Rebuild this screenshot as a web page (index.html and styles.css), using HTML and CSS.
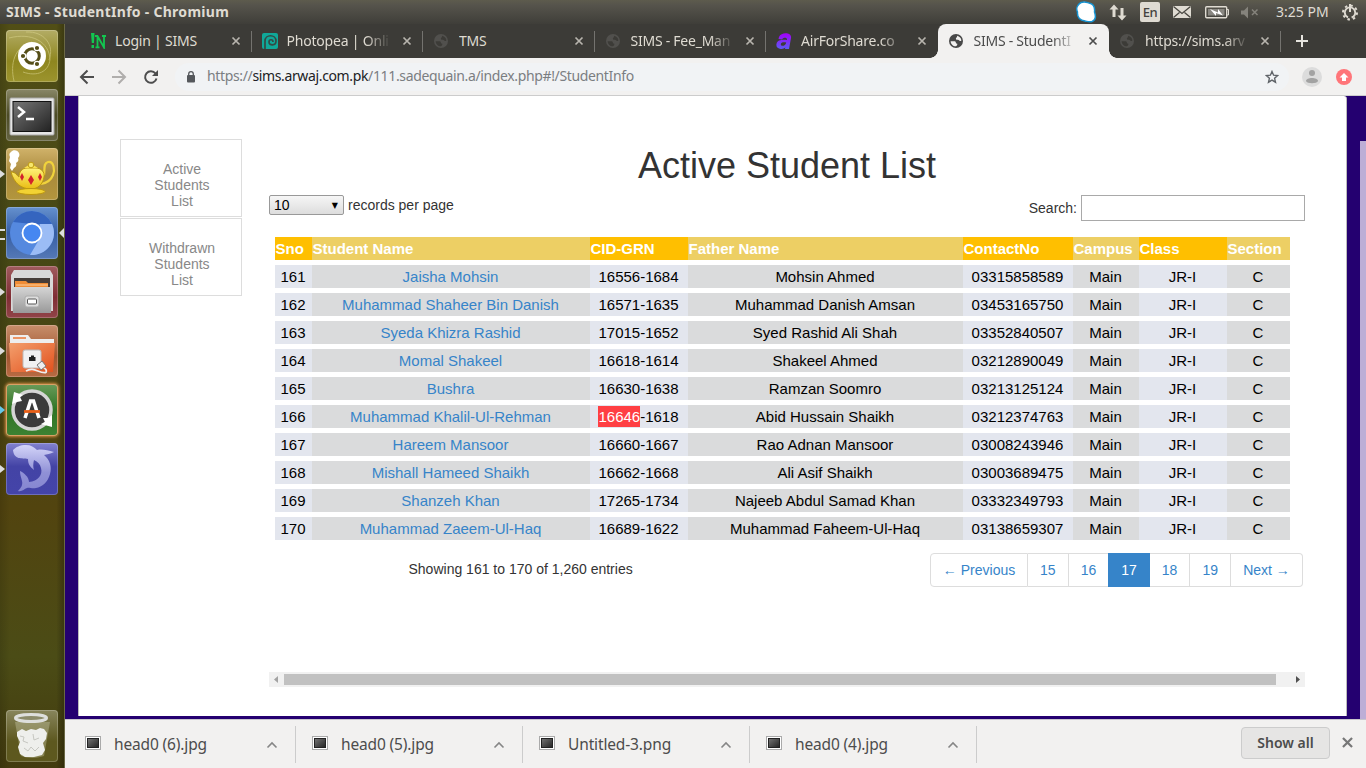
FILE: index.html
```html
<!DOCTYPE html>
<html lang="en">
<head>
<meta charset="utf-8">
<title>SIMS - StudentInfo</title>
<link rel="stylesheet" href="styles.css">
</head>
<body>
<svg class="defs" width="0" height="0">
  <defs>
    <symbol id="globe" viewBox="0 0 14 14"><circle cx="7" cy="7" r="7" fill="currentColor"/><path class="land" d="M1.6 7.2h3.6c1.3 0 1.7.7 1.7 1.6 0 .8.7.9 1.4.9.2 1.300-.4 2-1.300 2.500-3 .1-5.200-2-5.400-5zM8.200 1.700c2.300.5 4 2.500 4.200 4.700-.6.700-1.200.7-1.900.4-.5-.8-1.200-1-2.300-1-1 0-1.300-.6-1.300-1.300 0-.8 1.400-1.200 1.300-2.800z"/></symbol>
    <symbol id="close" viewBox="0 0 10 10"><path d="M1.500 1.500l7 7M8.500 1.500l-7 7" fill="none" stroke="currentColor" stroke-width="1.700"/></symbol>
    <symbol id="chev" viewBox="0 0 12 8"><path d="M1.500 6.500L6 2l4.500 4.500" fill="none" stroke="#868686" stroke-width="1.600"/></symbol>
    <symbol id="pic" viewBox="0 0 16 14"><rect x=".5" y=".5" width="15" height="13" fill="#fff" stroke="#aaa"/><rect x="2.500" y="2.500" width="11" height="9" fill="url(#dark)" stroke="#222"/></symbol>
    <linearGradient id="dark" x1="0" y1="0" x2="1" y2="1"><stop offset="0" stop-color="#777"/><stop offset="1" stop-color="#222"/></linearGradient>
    <linearGradient id="silver" x1="0" y1="0" x2="0" y2="1"><stop offset="0" stop-color="#d5d5d5"/><stop offset="1" stop-color="#999"/></linearGradient>
    <linearGradient id="orange" x1="0" y1="0" x2="1" y2="1"><stop offset="0" stop-color="#f3a06e"/><stop offset="1" stop-color="#e2501c"/></linearGradient>
    <linearGradient id="gold" x1="0" y1="0" x2="0" y2="1"><stop offset="0" stop-color="#fff27a"/><stop offset="1" stop-color="#e9bc12"/></linearGradient>
    <linearGradient id="fin" x1="0" y1="0" x2="0" y2="1"><stop offset="0" stop-color="#d3d4f8"/><stop offset=".6" stop-color="#8f90d6"/><stop offset="1" stop-color="#8586d0"/></linearGradient>
    <linearGradient id="purple" x1="0" y1="0" x2="0" y2="1"><stop offset="0" stop-color="#a400f8"/><stop offset="1" stop-color="#5b5bf6"/></linearGradient>
  </defs>
</svg>

<header class="titlebar">
  <span class="wm-title">SIMS - StudentInfo - Chromium</span>
  <svg class="tray" width="290" height="24" viewBox="1076 0 290 24">
    <path d="M1082 2.500c4-1.500 6 0 8 .5 5 1 6 5 5.500 9 1.500 4 1 8-2.500 9.500-3 1-5-.2-7-.500-5-.7-8-4-7.500-9-1.500-3-.5-7 3.500-9.500z" transform="translate(-1)" fill="#fff" stroke="#1793d1" stroke-width="1.500"/>
    <g fill="#dfdbd2"><path d="M1114 4.500l4.500 5h-3v7.500h-3V9.500h-3zM1122 20.500l-4.500-5h3V8h3v7.500h3z"/>
    <rect x="1140" y="2" width="20" height="20" rx="2"/><rect x="1173" y="6" width="18" height="12"/></g>
    <path d="M1173.500 6.500l8.500 7 8.500-7M1173.500 17.500l6-5M1190.500 17.500l-6-5" fill="none" stroke="#47453f" stroke-width="1.300"/>
    <rect x="1205.700" y="6.700" width="21" height="11" rx="1" fill="none" stroke="#dfdbd2" stroke-width="1.400"/><rect x="1208" y="9" width="16.500" height="6.500" fill="#898781"/><path d="M1227 9.500h1.500v5.500h-1.500" fill="none" stroke="#dfdbd2"/><path d="M1210 9l8 3.500V9l5 6.500-7-2.500v3z" fill="#fff"/>
    <path d="M1241 10.500h3l4-4v12l-4-4h-3z" fill="#85837c"/><path d="M1252 9.500l5.500 5.500m0-5.500l-5.500 5.500" stroke="#85837c" stroke-width="1.500"/>
    <g fill="none" stroke="#dfdbd2"><circle cx="1350" cy="12.500" r="5.200" stroke-width="1.800" stroke-dasharray="29 3.670" stroke-dashoffset="-10" transform="rotate(0 1350 12.500)"/><circle cx="1350" cy="12.500" r="7" stroke-width="2" stroke-dasharray="2.500 2.998"/><path d="M1350 4v8" stroke-width="2"/></g>
  </svg>
  <span class="lang">En</span><span class="clock">3:25 PM</span>
</header>

<div class="desktop">
<nav class="launcher">
  <div class="tile dash"><svg viewBox="0 0 52 52"><g fill="none" stroke="#d6d089" opacity=".6"><path d="M3 8C26 2 43 12 44 29 43 42 31 47 17 42" /><path d="M8 51C4 34 8 17 26 12M20 2c18-1 29 13 23 28"/></g><circle cx="26" cy="26" r="14" fill="#fff"/><circle cx="26" cy="26" r="7.300" fill="none" stroke="#554e18" stroke-width="3"/><g fill="#554e18" stroke="#fff" stroke-width="1.200"><circle cx="17" cy="26" r="2.700"/><circle cx="31" cy="18" r="2.700"/><circle cx="31" cy="34" r="2.700"/></g></svg></div>
  <div class="tile term"><svg viewBox="0 0 52 52"><rect x="4" y="9" width="44" height="37" rx="1" fill="#e5e5e5" stroke="#aaa"/><rect x="7" y="12.500" width="38" height="30" fill="url(#dark)" stroke="#111"/><path d="M12 18l6 5-6 5M20 30h8" stroke="#fff" stroke-width="2.500" fill="none"/></svg></div>
  <div class="tile lamp run"><svg viewBox="0 0 52 52"><path d="M5 4c2-3 7-2 8 1 1 2 0 4-1 5 1 2 0 4-2 5 1 2 0 4-2 5l-2 3-2-3 1-4-2-3 1-4c-1-2-1-4 1-5z" fill="#fff"/><path d="M38 27c1-5-1-12 4-13 6-1 7 8 5 13-2 5-6 8-12 9" fill="none" stroke="#f0d23c" stroke-width="2.200"/><path d="M5 24c5 0 6 4 8 5 0-5 3-9 8-9h9c5 0 9 4 8 9-1 7-6 12-13 12-10 0-17-6-20-17z" fill="url(#gold)" stroke="#bd970e"/><path d="M18 20q7-6 14 0z" fill="#f8df4d"/><circle cx="25" cy="17" r="2.800" fill="#f6e66c" stroke="#c29d12"/><ellipse cx="25" cy="43.500" rx="14" ry="3" fill="#f2d233" stroke="#bd970e"/><path d="M25 27l3 5-3 5-3-5zM16 25l2 4-2 4-2-4zM34 25l2 4-2 4-2-4z" fill="#d3222b"/></svg></div>
  <div class="tile chrom run two"><svg viewBox="0 0 52 52"><circle cx="26" cy="26" r="22" fill="#5589df"/><path d="M7 15a22 22 0 0 1 39 2H26z" fill="#3565bf"/><path d="M46 17a22 22 0 0 1-22 31l10-17V17z" fill="#9bbcf5"/><circle cx="26" cy="26" r="9.500" fill="#4687f1" stroke="#fff" stroke-width="1.800"/></svg></div>
  <div class="tile cab run"><svg viewBox="0 0 52 52"><path d="M8 4h36l3 5v36H5V9z" fill="#d9d9d9"/><rect x="8" y="12" width="36" height="11" fill="#463d39"/><path d="M9 15h11l2 2h20v6H9z" fill="#ef8c36"/><path d="M10 19h32" stroke="#ffd09d"/><path d="M6 21h40l-1 26H7z" fill="url(#silver)"/><rect x="19" y="30" width="14" height="11" rx="2" fill="#ddd" stroke="#aaa"/><rect x="21.500" y="33" width="9" height="5" rx="1" fill="#fff" stroke="#555"/></svg></div>
  <div class="tile folder run"><svg viewBox="0 0 52 52"><path d="M4 10h18l3 4h23v8H4z" fill="#eee"/><path d="M7 13h13" stroke="#eb9464" stroke-width="2"/><path d="M3 18h46l-2 29H5z" fill="url(#orange)"/><rect x="17" y="25" width="18" height="18" rx="2" fill="#f1f1f1" stroke="#bbb"/><path d="M23 36v-4h2v-1.500h3V32h1.500v4z" fill="#222"/><path d="M20 46c8-5 13 3 20 1.500M36 42c4 1 5 4 4 5.500" fill="none" stroke="#eee" stroke-width="1.800"/><path d="M31 40l5-4 4 5-5 4z" fill="#eee" stroke="#777"/></svg></div>
  <div class="tile update run focus"><svg viewBox="0 0 52 52"><circle cx="26" cy="26" r="19" fill="#3b3b3b" stroke="#d5d5d5" stroke-width="3.500"/><path d="M8 8l9 3-3 2 2 4-5 1-5 2zM46 43l-11-3 4-2-2-4 5 0 4-3z" fill="#fff"/><path d="M19 34l5.500-17h3L33 34" fill="none" stroke="#fff" stroke-width="3.500"/><path d="M18 27.500h16" stroke="#e96019" stroke-width="2.800"/></svg></div>
  <div class="tile dolphin run"><svg viewBox="0 0 52 52"><path d="M7 7c3-3 7-5 13-5 5 0 8 2 11 5 5-1 10 0 17 2-4 2-7 2-10 3 6 5 8 12 6 19-2 8-8 13-14 14-4 1-7-1-9 0-3 1-5 4-9 3 3-3 5-6 4-10-1-4-2-6-2-10 4 2 9 6 9 11 9-1 14-7 12-14-1-4-3-6-7-8-1 4-1 7 0 10-4-3-6-6-6-11-6-1-14 1-15-9z" fill="url(#fin)"/></svg></div>
  <div class="tile trash"><svg viewBox="0 0 52 52"><path d="M9 12l6 34q11 4 23 0l6-34z" fill="#d8d8b8" opacity=".35"/><path d="M11 22l5-3 4 2 5-2 5 1 4-2 4 1 3 4-1 6-3 4 2 7-3 5-8 2-9 0-5-3-2-7 2-5-3-6z" fill="#eeefec"/><path d="M14 26l4 1-1 4 5 2M27 24l1 6 5-2M18 38l4 3 3-4 4 4 4-4" fill="none" stroke="#c6c7c1"/><ellipse cx="25" cy="8" rx="15.500" ry="3.500" fill="#8c8b6a" stroke="#dedfdc" stroke-width="3"/></svg></div>
</nav>

<div class="browser">
  <div class="tabs">
    <div class="tab"><svg class="fav" viewBox="0 0 16 16"><path d="M1 0h3.500L4 10H1.800zM1.500 12h2.500v3H1.500z" fill="#12c750"/><path d="M7.500 3v11M14 3v11.500L7.500 3M5 3h3M12 3h4M5.500 14.300h4" fill="none" stroke="#12c750" stroke-width="1.800"/></svg><span class="tt">Login | SIMS</span><svg class="x"><use href="#close"/></svg></div>
    <div class="tab"><svg class="fav" viewBox="0 0 16 16"><rect width="16" height="16" rx="2" fill="#10a899"/><path d="M3 16V8c0-7 11-7 11 0 0 5-7 5-7 1 0-3 4-3 4 0" fill="none" stroke="#344a46" stroke-width="1.700"/></svg><span class="tt fade">Photopea | Onli</span><svg class="x"><use href="#close"/></svg></div>
    <div class="tab"><svg class="fav globe"><use href="#globe" width="14" height="14" x="1" y="1"/></svg><span class="tt">TMS</span><svg class="x"><use href="#close"/></svg></div>
    <div class="tab"><svg class="fav globe"><use href="#globe" width="14" height="14" x="1" y="1"/></svg><span class="tt fade tight">SIMS - Fee_Man</span><svg class="x"><use href="#close"/></svg></div>
    <div class="tab nosep"><svg class="fav" viewBox="0 0 16 16"><path d="M3 4c2-5 13-5 12 1l-2 11H9l.4-1.500C6 17.500-1 16 .6 10.500 1.500 7 6 6.500 11 7c.6-3-4-3-5-.5L2.500 6zM10.200 9.500C7 9 5 9.500 4.800 11.300c0 2.500 4.900 2 5.400-1.800z" fill="url(#purple)"/></svg><span class="tt fade">AirForShare.co</span><svg class="x"><use href="#close"/></svg></div>
    <div class="tab active"><svg class="fav globe"><use href="#globe" width="14" height="14" x="1" y="1"/></svg><span class="tt fade tight">SIMS - StudentI</span><svg class="x"><use href="#close"/></svg></div>
    <div class="tab"><svg class="fav globe"><use href="#globe" width="14" height="14" x="1" y="1"/></svg><span class="tt fade">https://sims.arv</span><svg class="x"><use href="#close"/></svg></div>
    <svg class="plus" viewBox="0 0 12 12"><path d="M6 0v12M0 6h12" stroke="#e6e4de" stroke-width="2"/></svg>
  </div>
  <div class="toolbar">
    <svg class="navs" width="110" height="36" viewBox="65 58 110 36" fill="none" stroke-width="2"><path d="M94 76H81M87.500 69.500L81 76l6.500 6.500" stroke="#4d4d4d"/><path d="M112 76h13M118.500 69.500L125 76l-6.500 6.500" stroke="#b0aeac"/><path d="M155.500 72.500a5.800 5.800 0 1 0 1 5" stroke="#4d4d4d"/><path d="M158 69v6h-6z" fill="#4d4d4d"/></svg>
    <div class="omni">
      <svg width="10" height="12" viewBox="0 0 10 12"><rect x="1" y="4" width="8" height="7.500" rx="1" fill="#55585c"/><path d="M2.700 5V3a2.300 2.300 0 0 1 4.600 0v2" fill="none" stroke="#55585c" stroke-width="1.300"/></svg>
      <span class="url">https://<b>sims.arwaj.com.pk</b>/111.sadequain.a/index.php#!/StudentInfo</span>
      <svg class="star" width="14" height="14" viewBox="0 0 14 14"><path d="M7 1.500l1.600 3.700 4 .4-3 2.700.9 3.900L7 10.100l-3.500 2.100.9-3.900-3-2.700 4-.4z" fill="none" stroke="#5f6368" stroke-width="1.400"/></svg>
    </div>
    <svg class="user" width="20" height="20" viewBox="0 0 20 20"><circle cx="10" cy="10" r="10" fill="#dcdcdc"/><circle cx="10" cy="6" r="3" fill="#a2a2a2"/><path d="M4 14c0-4 12-4 12 0-1 3-11 3-12 0z" fill="#a2a2a2"/></svg>
    <svg class="up" width="16" height="16" viewBox="0 0 16 16"><circle cx="8" cy="8" r="8" fill="#ff7579"/><path d="M8 4l4.500 4.500H10V12H6V8.500H3.500z" fill="#fff"/></svg>
  </div>

  <div class="viewport">
    <main class="panel">
      <aside class="side"><a>Active<br>Students<br>List</a><a>Withdrawn<br>Students<br>List</a></aside>
      <section class="content">
        <h1>Active Student List</h1>
        <div class="filters">
          <div class="length"><span class="select">10<i>▼</i></span>records per page</div>
          <label class="search">Search: <span class="field"></span></label>
        </div>
        <table>
          <colgroup><col class="c1"><col class="c2"><col class="c3"><col class="c4"><col class="c5"><col class="c6"><col class="c7"><col class="c8"></colgroup>
          <thead><tr><th>Sno</th><th>Student Name</th><th>CID-GRN</th><th>Father Name</th><th>ContactNo</th><th>Campus</th><th>Class</th><th>Section</th></tr></thead>
          <tbody>
            <tr><td>161</td><td>Jaisha Mohsin</td><td>16556-1684</td><td>Mohsin Ahmed</td><td>03315858589</td><td>Main</td><td>JR-I</td><td>C</td></tr>
            <tr><td>162</td><td>Muhammad Shaheer Bin Danish</td><td>16571-1635</td><td>Muhammad Danish Amsan</td><td>03453165750</td><td>Main</td><td>JR-I</td><td>C</td></tr>
            <tr><td>163</td><td>Syeda Khizra Rashid</td><td>17015-1652</td><td>Syed Rashid Ali Shah</td><td>03352840507</td><td>Main</td><td>JR-I</td><td>C</td></tr>
            <tr><td>164</td><td>Momal Shakeel</td><td>16618-1614</td><td>Shakeel Ahmed</td><td>03212890049</td><td>Main</td><td>JR-I</td><td>C</td></tr>
            <tr><td>165</td><td>Bushra</td><td>16630-1638</td><td>Ramzan Soomro</td><td>03213125124</td><td>Main</td><td>JR-I</td><td>C</td></tr>
            <tr><td>166</td><td>Muhammad Khalil-Ul-Rehman</td><td><mark>16646</mark>-1618</td><td>Abid Hussain Shaikh</td><td>03212374763</td><td>Main</td><td>JR-I</td><td>C</td></tr>
            <tr><td>167</td><td>Hareem Mansoor</td><td>16660-1667</td><td>Rao Adnan Mansoor</td><td>03008243946</td><td>Main</td><td>JR-I</td><td>C</td></tr>
            <tr><td>168</td><td>Mishall Hameed Shaikh</td><td>16662-1668</td><td>Ali Asif Shaikh</td><td>03003689475</td><td>Main</td><td>JR-I</td><td>C</td></tr>
            <tr><td>169</td><td>Shanzeh Khan</td><td>17265-1734</td><td>Najeeb Abdul Samad Khan</td><td>03332349793</td><td>Main</td><td>JR-I</td><td>C</td></tr>
            <tr><td>170</td><td>Muhammad Zaeem-Ul-Haq</td><td>16689-1622</td><td>Muhammad Faheem-Ul-Haq</td><td>03138659307</td><td>Main</td><td>JR-I</td><td>C</td></tr>
          </tbody>
        </table>
        <div class="foot">
          <span class="info">Showing 161 to 170 of 1,260 entries</span>
          <div class="pages"><a class="prev">← Previous</a><a>15</a><a>16</a><a class="on">17</a><a>18</a><a>19</a><a class="next">Next →</a></div>
        </div>
        <div class="hscroll"><svg width="15" height="15"><path d="M9 4v7L5 7.500z" fill="#a3a3a3"/></svg><div class="thumb"></div><svg width="15" height="15"><path d="M6 4v7l4-3.500z" fill="#505050"/></svg></div>
      </section>
    </main>
    <div class="vthumb"></div>
  </div>

  <footer class="downloads">
    <div class="dl"><svg class="pic"><use href="#pic"/></svg><span>head0 (6).jpg</span><svg class="chev"><use href="#chev"/></svg></div>
    <div class="dl"><svg class="pic"><use href="#pic"/></svg><span>head0 (5).jpg</span><svg class="chev"><use href="#chev"/></svg></div>
    <div class="dl"><svg class="pic"><use href="#pic"/></svg><span>Untitled-3.png</span><svg class="chev"><use href="#chev"/></svg></div>
    <div class="dl"><svg class="pic"><use href="#pic"/></svg><span>head0 (4).jpg</span><svg class="chev"><use href="#chev"/></svg></div>
    <div class="all">Show all</div>
    <svg class="dx" viewBox="0 0 10 10"><use href="#close"/></svg>
  </footer>
</div>
</div>
</body>
</html>
```
FILE: styles.css
```css
* { box-sizing: border-box; }
body { margin: 0; width: 1366px; height: 768px; overflow: hidden; font-family: "Liberation Sans", sans-serif; color: #333; }
.defs { position: absolute; }
svg { display: block; flex: none; }

.titlebar { position: relative; height: 24px; background: linear-gradient(#5d5b4d, #56544c 20%, #3f3e39); display: flex; justify-content: space-between; align-items: center; font-family: "Noto Sans", sans-serif; color: #dfdbd2; }
.wm-title { padding: 0 0 2px 6px; font-size: 14px; font-weight: 700; letter-spacing: .28px; white-space: nowrap; }
.lang, .clock { position: absolute; top: 0; line-height: 24px; white-space: nowrap; }
.lang { left: 1140px; width: 20px; text-align: center; font-size: 13px; font-weight: 500; letter-spacing: -.5px; color: #45433e; }
.clock { left: 1276px; font-size: 14px; }

.desktop { display: flex; height: 744px; }
.launcher { width: 65px; flex: none; padding: 6px 0 6px 6px; display: flex; flex-direction: column; gap: 7px; border-right: 1px solid #6a6844; background: linear-gradient(90deg, rgba(0,0,0,.12), transparent 15%, transparent 88%, rgba(0,0,0,.25)), linear-gradient(#514e16, #454715 35%, #52440f 65%, #4b4c16 85%, #433b0e); }
.tile { position: relative; width: 52px; height: 52px; border-radius: 4px; box-shadow: inset 0 0 0 1px rgba(255,255,255,.22); }
.tile svg { width: 52px; height: 52px; }
.dash { background: linear-gradient(#b3ac65, #8e861f 60%, #9c942e); }
.term { background: linear-gradient(#898767, #4c4b25 50%, #656443); }
.lamp { background: linear-gradient(#d0b26a, #a98a3b 50%, #b3963d); }
.chrom { background: linear-gradient(#6591cf, #365ea4 50%, #5579b6); }
.cab { background: linear-gradient(#a05b5e, #7f2d34 60%, #914448); }
.folder { background: linear-gradient(#c78e6b, #a25630 60%, #b96b43); }
.update { background: linear-gradient(#699b5a, #2f7425 50%, #3c8232); }
.dolphin { background: linear-gradient(#8282cf, #4343a5 45%, #4444a9); }
.trash { margin-top: auto; background: linear-gradient(#88855c, #5d581f 60%, #5d581e); }
.focus { box-shadow: 0 0 3px 1px #d28b42, inset 0 0 0 1px #d9a066; }
.run::before { content: ""; position: absolute; left: -6px; top: 22px; border: 4px solid transparent; border-left: 5px solid #ddd; border-right: 0; }
.two::before { border: 0; border-top: 2px solid #ddd; border-bottom: 2px solid #ddd; width: 5px; height: 7px; }
.two::after { content: ""; position: absolute; left: 53px; top: 21px; border: 5px solid transparent; border-right-color: #ddd; border-left: 0; }
.focus::before { border-left-color: #65c7e8; }

.browser { flex: 1; min-width: 0; display: flex; flex-direction: column; font-family: "Noto Sans", sans-serif; }
.tabs { height: 34px; padding-left: 15px; background: #3c3b37; display: flex; align-items: center; }
.tab { position: relative; width: 171.5px; height: 34px; flex: none; padding: 0 11px 0 10px; display: flex; align-items: center; color: #dfdbd2; font-size: 14px; letter-spacing: -.2px; }
.tab::after { content: ""; position: absolute; right: 0; top: 7px; width: 1px; height: 21px; background: #74736f; }
.nosep::after, .active::after { display: none; }
.fav { width: 16px; height: 16px; margin-right: 9px; }
.globe { --land: #3c3b37; color: #51504d; }
.land { fill: var(--land); }
.active .globe { --land: #f2f1f0; color: #484848; }
.globe + .tt { margin-left: 1px; margin-right: 8px; }
.tt { flex: 1; overflow: hidden; white-space: nowrap; margin-right: 9px; line-height: 20px; }
.tight { letter-spacing: -.25px; }
.fade { -webkit-mask-image: linear-gradient(90deg, #000 74%, transparent 98%); mask-image: linear-gradient(90deg, #000 74%, transparent 98%); }
.x { width: 10px; height: 10px; color: #b8b5ae; }
.active { background: #f2f1f0; border-radius: 8px 8px 0 0; color: #4c4c4c; }
.active::before { content: ""; position: absolute; bottom: 0; left: -8px; right: -8px; height: 8px; background: radial-gradient(circle at 0 0, transparent 7.5px, #f2f1f0 8px) left / 8px 8px no-repeat, radial-gradient(circle at 100% 0, transparent 7.5px, #f2f1f0 8px) right / 8px 8px no-repeat; }
.active .x { color: #4c4c4c; }
.plus { width: 12px; height: 12px; margin-left: 15px; }

.toolbar { height: 38px; background: #f2f1f0; border-bottom: 1px solid #ccc; display: flex; align-items: center; padding-right: 14px; }
.omni { flex: 1; height: 28px; border-radius: 14px; background: #f1f3f5; display: flex; align-items: center; padding: 0 10px 0 11px; }
.url { flex: 1; margin-left: 11px; padding-bottom: 2px; font-size: 14px; letter-spacing: -.36px; color: #7b7e82; white-space: nowrap; }
.url b { font-weight: 400; color: #202124; }
.user { margin-left: 13px; }
.up { margin-left: 14px; }

.viewport { height: 623px; background: #240070; display: flex; justify-content: space-between; font-family: "Liberation Sans", sans-serif; }
.vthumb { width: 6px; margin-top: 45px; background: #bdaed6; }
.panel { margin-left: 13px; width: 1269px; height: 620px; background: #fff; border-left: 1px solid #bbb; border-right: 1px solid #bbb; border-radius: 0 3px 0 0; display: flex; padding-left: 41px; }
.side { width: 122px; padding-top: 43px; display: flex; flex-direction: column; gap: 1px; }
.side a { height: 78px; border: 1px solid #ddd; padding: 21px 0 0 2px; text-align: center; font-size: 14px; line-height: 16px; color: #888; }
.content { width: 1036px; margin-left: 27px; display: flex; flex-direction: column; }
h1 { margin: 50px 0 0; font-size: 36px; line-height: 40px; font-weight: 400; text-align: center; }
.filters { display: flex; justify-content: space-between; margin-top: 9px; height: 26px; font-size: 14px; }
.length { display: flex; height: 20px; align-items: center; }
.select { width: 75px; height: 20px; margin-right: 4px; border: 1px solid #999; border-radius: 2px; background: linear-gradient(#f6f6f6, #ddd); color: #000; display: flex; align-items: center; justify-content: space-between; padding: 0 4px; }
.select i { font: 8px "DejaVu Sans", sans-serif; margin-right: 1px; }
.search { display: flex; align-items: center; gap: 4px; }
.field { width: 224px; height: 26px; border: 1px solid #a9a9a9; background: #fff; }
table { width: 1015px; margin: 11px 0 0 6px; table-layout: fixed; border-collapse: separate; border-spacing: 0 5px; font-size: 15px; color: #000; }
.c1 { width: 37px; } .c2 { width: 278px; } .c3 { width: 98px; } .c4 { width: 275px; } .c5 { width: 110px; } .c6 { width: 66px; } .c7 { width: 88px; } .c8 { width: 63px; }
th, td { height: 23px; padding: 0; line-height: 21px; white-space: nowrap; }
th { text-align: left; color: #fff; background: #ffbf00; padding-left: .5px; }
th:nth-child(even) { background: #edcf64; }
td { text-align: center; background: #e3e6ee; padding-right: 1px; }
td:nth-child(even) { background: #dadbdc; }
td:nth-child(2) { color: #3684c9; }
mark { color: #fff; background: #ff3f43; display: inline-block; height: 21px; }
.foot { display: flex; justify-content: space-between; margin-top: 8px; padding: 0 2px 0 139.5px; font-size: 14px; }
.info { line-height: 32px; }
.pages { display: flex; height: 34px; color: #3684c9; }
.pages a { width: 40.6px; border: 1px solid #ddd; border-left: 0; text-align: center; line-height: 32px; white-space: nowrap; }
.pages .prev { width: 98px; border-left: 1px solid #ddd; border-radius: 4px 0 0 4px; }
.pages .next { width: 72px; border-radius: 0 4px 4px 0; }
.pages .on { background: #3684c9; border-color: #3684c9; color: #fff; box-shadow: -1px 0 #3684c9; }
.hscroll { margin-top: 85px; height: 15px; background: #f1f1f1; display: flex; align-items: center; }
.thumb { width: 992px; height: 11px; background: #c1c1c1; margin-right: 14px; }

.downloads { flex: 1; border-top: 1px solid #c8c6cc; background: #f2f1f0; display: flex; align-items: flex-start; padding-top: 6px; color: #4c4c4c; font-size: 15.5px; }
.dl { width: 227px; height: 37px; border-right: 1px solid #ccc; display: flex; padding: 0 17px 0 16px; align-items: center; white-space: nowrap; }
.dl:first-child { width: 231px; padding-left: 20px; }
.pic { width: 16px; height: 14px; margin: -3px 13px 0 0; }
.dl span { flex: 1; padding-bottom: 2px; letter-spacing: -.14px; }
.chev { width: 12px; height: 8px; }
.all { width: 89px; height: 32px; margin: 1px 0 0 264px; border: 1px solid #ccc; border-radius: 4px; background: #e6e5e4; font-size: 14px; font-weight: 600; text-align: center; line-height: 30px; }
.dx { width: 13px; height: 13px; color: #777; margin: 10px 0 0 11px; }
```
